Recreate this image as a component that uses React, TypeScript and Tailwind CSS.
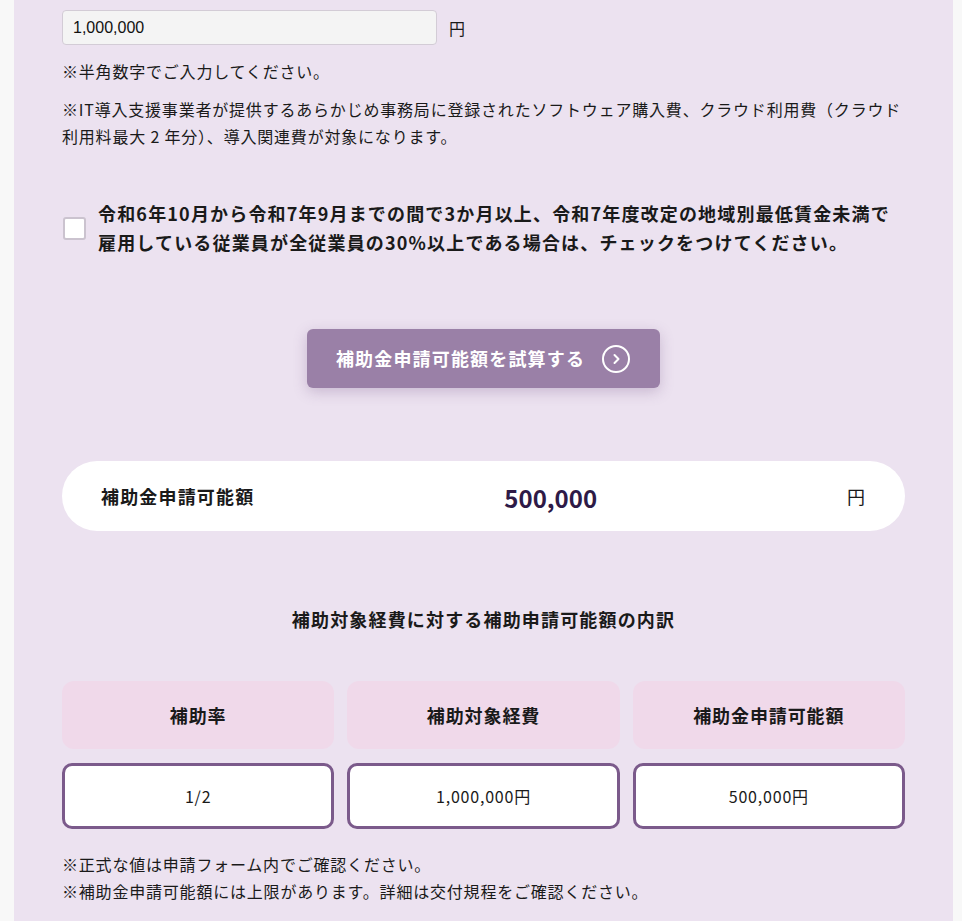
import { useState } from 'react';

const jp = "font-['Noto_Sans_CJK_JP','Noto_Sans',sans-serif]";

export default function App() {
  const [checked, setChecked] = useState(false);
  const [amount, setAmount] = useState('1,000,000');

  const rows = [
    { label: '補助率', value: '1/2' },
    { label: '補助対象経費', value: '1,000,000円' },
    { label: '補助金申請可能額', value: '500,000円' },
  ];

  return (
    <div className={`min-h-screen bg-[#f8f8f8] pl-[14px] pr-[9px] ${jp} text-[#1a1a1a]`}>
      <div className="bg-[#ece2f0] px-12 pt-[10px] pb-10 min-h-screen">
        {/* input */}
        <div className="flex items-center gap-3">
          <input
            value={amount}
            onChange={(e) => setAmount(e.target.value)}
            className="h-[35px] w-[375px] rounded-[4px] border border-[#d3ccd6] bg-[#f4f4f4] px-[10px] text-[16px] font-['Liberation_Sans',Arial,sans-serif] text-[#111] outline-none"
          />
          <span className="text-[16px] tracking-[0.05em]">円</span>
        </div>

        <p className="mt-[13px] text-[16px] leading-[27px] tracking-[0.05em]">※半角数字でご入力してください。</p>
        <p className="mt-[11px] text-[16px] leading-[27px] tracking-[0.05em]">
          ※IT導入支援事業者が提供するあらかじめ事務局に登録されたソフトウェア購入費、クラウド利用費（クラウド
          <br />
          利用料最大 2 年分）、導入関連費が対象になります。
        </p>

        {/* checkbox */}
        <label className="mt-[49px] flex items-center gap-3 cursor-pointer">
          <span className="ml-px flex h-[23px] w-[23px] shrink-0 items-center justify-center rounded-[3px] border-2 border-[#cbc3cf] bg-white">
            {checked && (
              <svg viewBox="0 0 16 16" className="h-4 w-4" fill="none" stroke="#7b5a8b" strokeWidth="2.5">
                <path d="M3 8.5l3 3 7-7" />
              </svg>
            )}
          </span>
          <input type="checkbox" className="hidden" checked={checked} onChange={(e) => setChecked(e.target.checked)} />
          <span className="text-[18px] font-bold leading-[29px] tracking-[0.065em]">
            令和6年10月から令和7年9月までの間で3か月以上、令和7年度改定の地域別最低賃金未満で
            <br />
            雇用している従業員が全従業員の30%以上である場合は、チェックをつけてください。
          </span>
        </label>

        {/* button */}
        <div className="mt-[72px] flex justify-center">
          <button className="flex h-[59px] w-[353px] items-center justify-center gap-4 rounded-[6px] bg-[#9a80a7] text-[18px] font-bold tracking-[0.065em] text-white shadow-[0_4px_14px_rgba(110,80,130,0.28)]">
            <span>補助金申請可能額を試算する</span>
            <svg viewBox="0 0 30 30" className="h-[30px] w-[30px]" fill="none" stroke="white" strokeWidth="2">
              <circle cx="15" cy="15" r="13" />
              <path d="M13.5 11l4 4-4 4" strokeLinecap="round" strokeLinejoin="round" />
            </svg>
          </button>
        </div>

        {/* result */}
        <div className="mt-[73px] flex h-[70px] items-center justify-between rounded-full bg-white px-[39px]">
          <span className="text-[18px] font-bold tracking-[0.065em]">補助金申請可能額</span>
          <span className="pt-[4px] text-[24px] font-bold text-[#2e1a47]">500,000</span>
          <span className="text-[18px] tracking-[0.05em]">円</span>
        </div>

        <h3 className="mt-[75px] text-center text-[18px] font-bold leading-[26px] tracking-[0.065em]">
          補助対象経費に対する補助申請可能額の内訳
        </h3>

        {/* breakdown */}
        <div className="mt-[49px] grid grid-cols-3 gap-x-[13px] gap-y-[14px]">
          {rows.map((r) => (
            <div key={r.label} className="flex h-[68px] items-center justify-center rounded-xl bg-[#f0d9ea] text-[18px] font-bold tracking-[0.05em]">
              {r.label}
            </div>
          ))}
          {rows.map((r) => (
            <div key={r.value} className="flex h-[66px] items-center justify-center rounded-[10px] border-[3px] border-[#7b5a8b] bg-white text-[16px] tracking-[0.05em]">
              {r.value}
            </div>
          ))}
        </div>

        <div className="mt-[22px] text-[16px] leading-[27px] tracking-[0.05em]">
          <p>※正式な値は申請フォーム内でご確認ください。</p>
          <p>※補助金申請可能額には上限があります。詳細は交付規程をご確認ください。</p>
        </div>
      </div>
    </div>
  );
}
